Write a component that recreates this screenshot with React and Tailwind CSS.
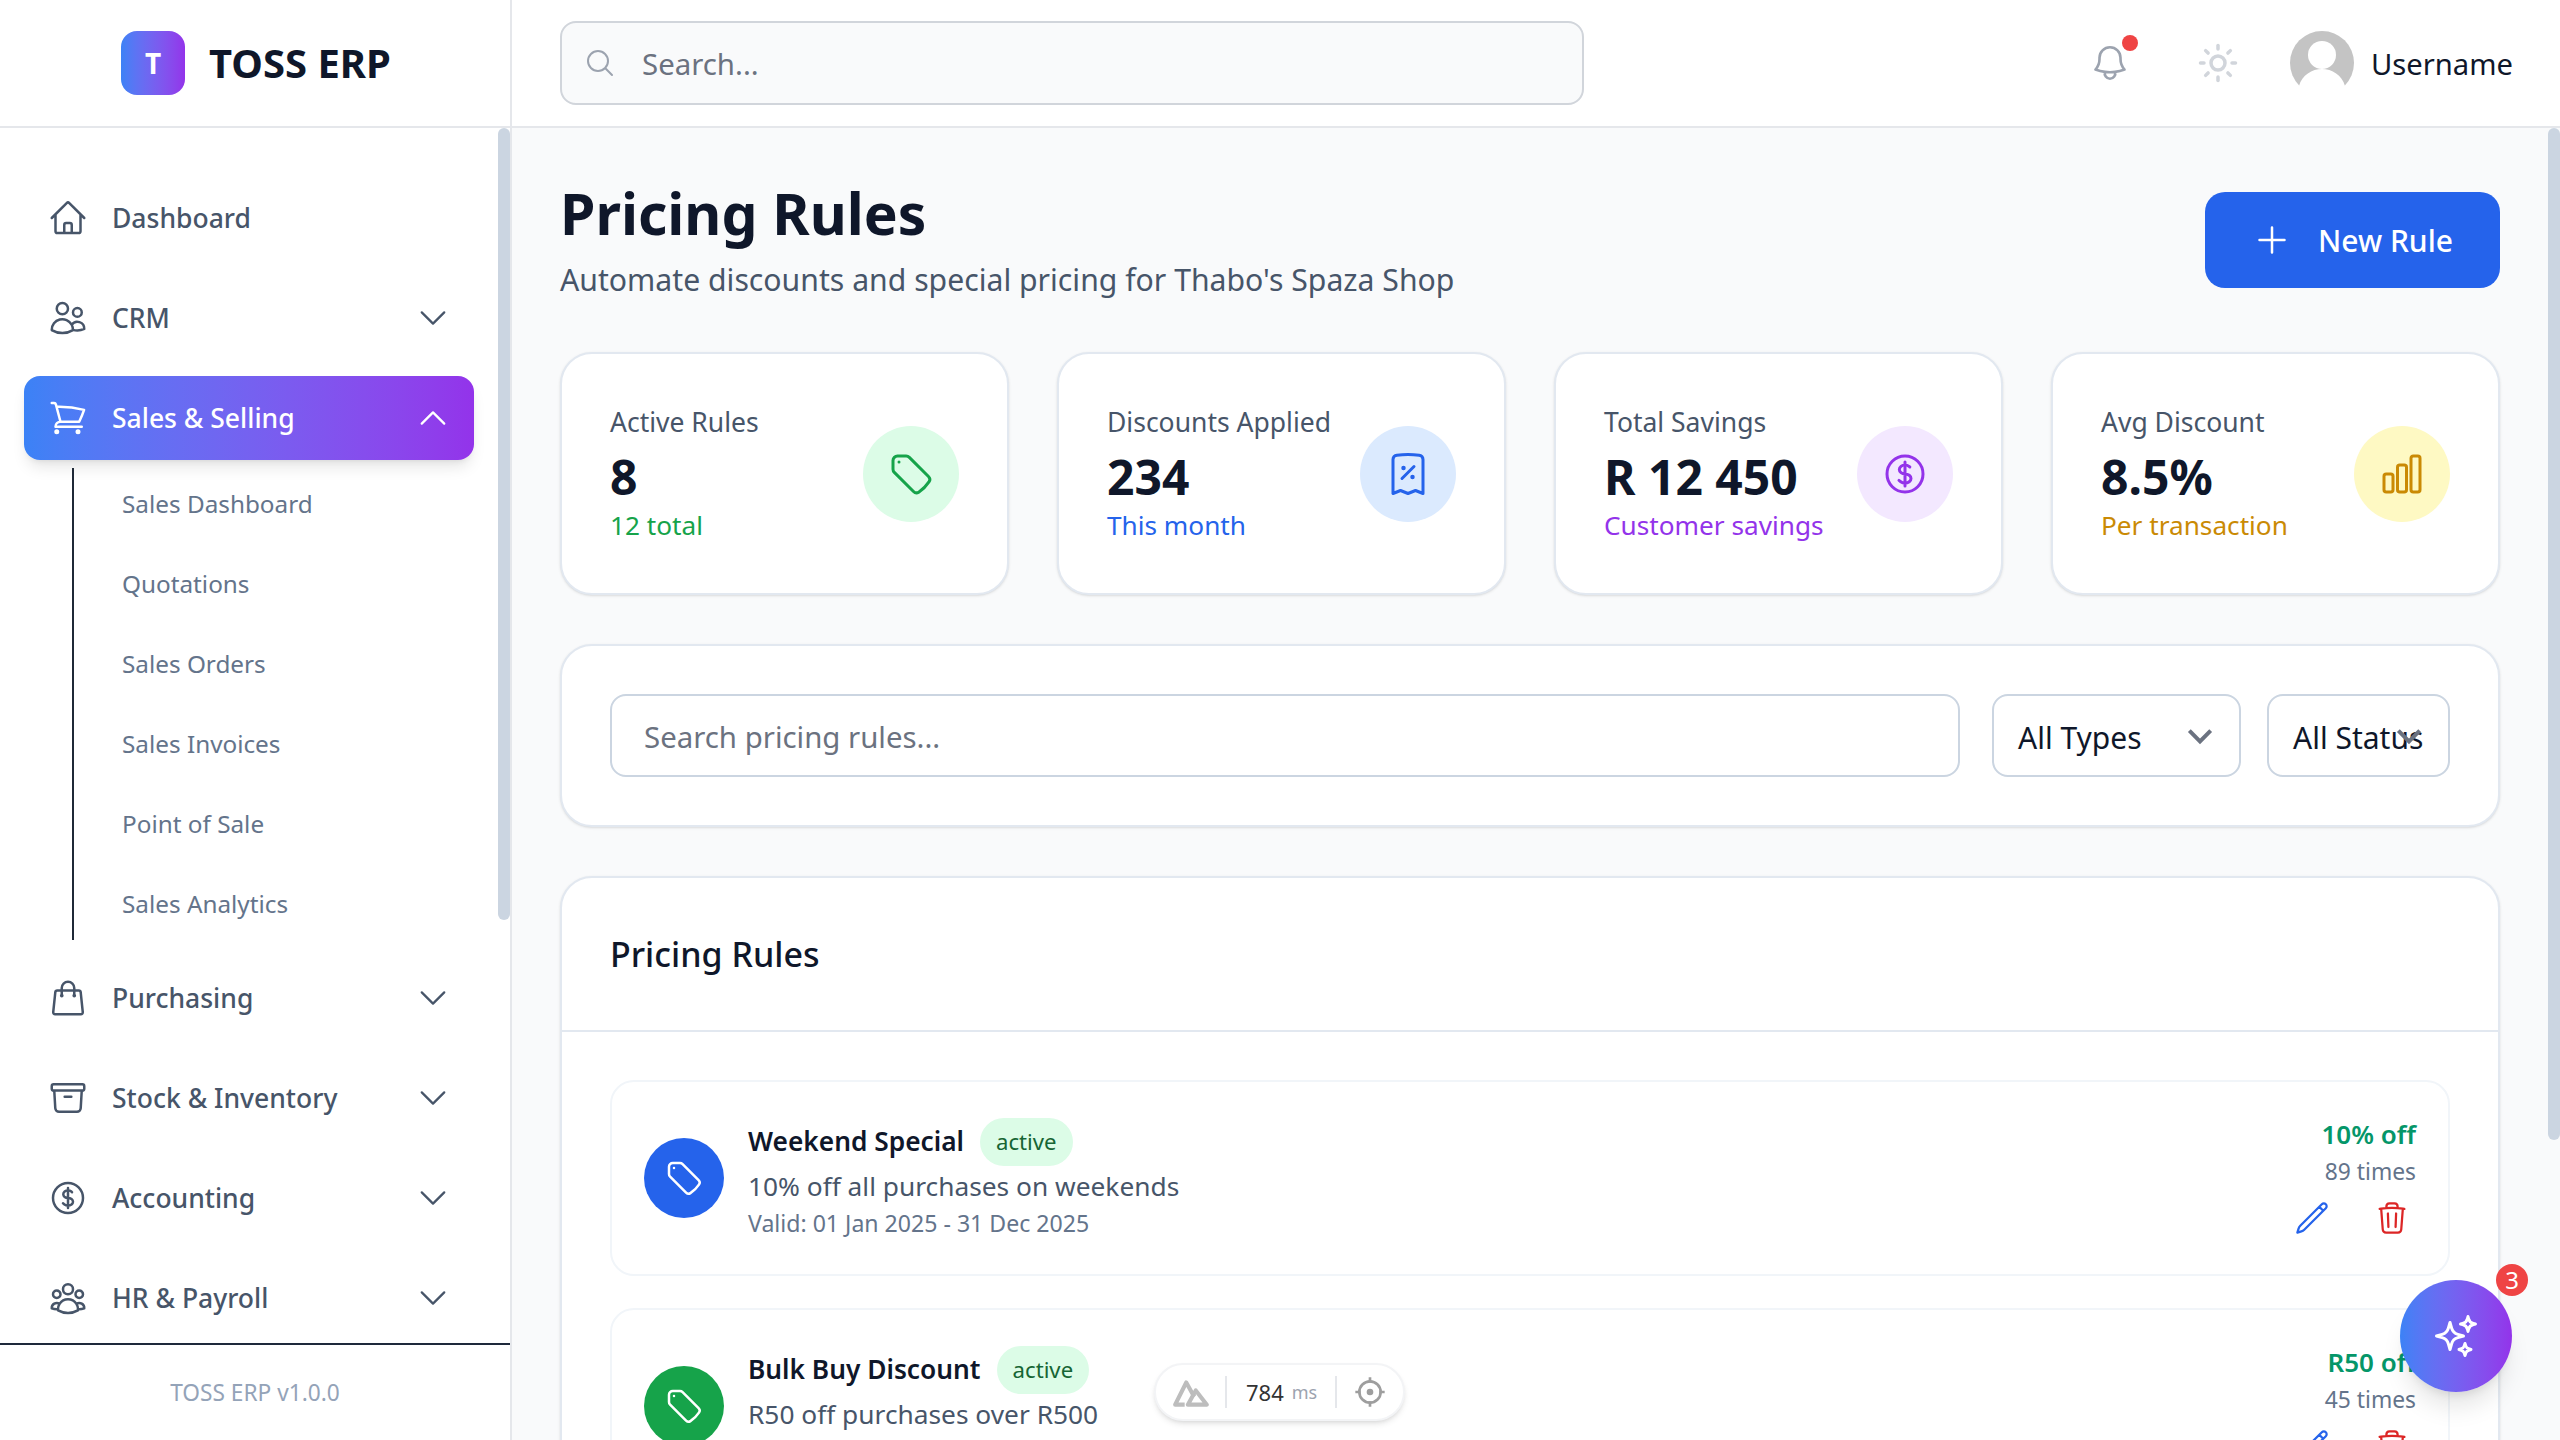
import {
  HiOutlineHome,
  HiOutlineUsers,
  HiOutlineShoppingCart,
  HiOutlineShoppingBag,
  HiOutlineArchiveBox,
  HiOutlineCurrencyDollar,
  HiOutlineUserGroup,
  HiOutlineChevronDown,
  HiOutlineChevronUp,
  HiOutlineMagnifyingGlass,
  HiOutlineBell,
  HiOutlinePlus,
  HiOutlineTag,
  HiOutlineReceiptPercent,
  HiOutlineChartBar,
  HiOutlinePencil,
  HiOutlineTrash,
  HiOutlineSparkles,
} from "react-icons/hi2";
import { Sun } from "lucide-react";

const subItems = ["Sales Dashboard", "Quotations", "Sales Orders", "Sales Invoices", "Point of Sale", "Sales Analytics"];

const stats = [
  { label: "Active Rules", value: "8", sub: "12 total", subColor: "text-[#16a34a]", bg: "bg-[#dcfce7]", Icon: HiOutlineTag, iconColor: "text-[#16a34a]" },
  { label: "Discounts Applied", value: "234", sub: "This month", subColor: "text-[#2563eb]", bg: "bg-[#dbeafe]", Icon: HiOutlineReceiptPercent, iconColor: "text-[#2563eb]" },
  { label: "Total Savings", value: "R 12 450", sub: "Customer savings", subColor: "text-[#9333ea]", bg: "bg-[#f3e8ff]", Icon: HiOutlineCurrencyDollar, iconColor: "text-[#9333ea]" },
  { label: "Avg Discount", value: "8.5%", sub: "Per transaction", subColor: "text-[#ca8a04]", bg: "bg-[#fef9c3]", Icon: HiOutlineChartBar, iconColor: "text-[#ca8a04]" },
];

// second rule's date line falls below the fold
const rules = [
  { name: "Weekend Special", desc: "10% off all purchases on weekends", valid: "Valid: 01 Jan 2025 - 31 Dec 2025", off: "10% off", times: "89 times", color: "bg-[#2563eb]" },
  { name: "Bulk Buy Discount", desc: "R50 off purchases over R500", off: "R50 off", times: "45 times", color: "bg-[#16a34a]" },
];

function NavItem({ Icon, label, chevron = true }) {
  return (
    <div className="flex h-[84px] shrink-0 items-center gap-[24px] rounded-[16px] pl-[24px] pr-[23px] text-[#475569]">
      <Icon className="h-[40px] w-[40px] shrink-0" />
      <span className="flex-1 pt-[1px] text-[26.5px] font-medium">{label}</span>
      {chevron && <HiOutlineChevronDown className="h-[36px] w-[36px] shrink-0" />}
    </div>
  );
}

function Sidebar() {
  return (
    <aside className="relative flex w-[512px] shrink-0 flex-col border-r-2 border-[#e5e7eb] bg-white">
      <nav className="flex flex-1 flex-col gap-[16px] overflow-hidden pl-[24px] pr-[36px] pt-[48px]">
        <NavItem Icon={HiOutlineHome} label="Dashboard" chevron={false} />
        <NavItem Icon={HiOutlineUsers} label="CRM" />
        <div>
          <div className="flex h-[84px] items-center gap-[24px] rounded-[16px] bg-gradient-to-r from-[#3b82f6] to-[#9333ea] pl-[24px] pr-[23px] text-white shadow-lg">
            <HiOutlineShoppingCart className="h-[40px] w-[40px] shrink-0" />
            <span className="flex-1 pt-[1px] text-[26.5px] font-medium">Sales &amp; Selling</span>
            <HiOutlineChevronUp className="h-[36px] w-[36px] shrink-0" />
          </div>
          <div className="ml-[48px] mt-[8px] flex flex-col gap-[16px] border-l-2 border-[#1f2937] py-[4px] pl-[48px]">
            {subItems.map((item) => (
              <div key={item} className="flex h-[64px] items-center text-[24.3px] text-[#64748b]">
                {item}
              </div>
            ))}
          </div>
        </div>
        <NavItem Icon={HiOutlineShoppingBag} label="Purchasing" />
        <NavItem Icon={HiOutlineArchiveBox} label="Stock & Inventory" />
        <NavItem Icon={HiOutlineCurrencyDollar} label="Accounting" />
        <NavItem Icon={HiOutlineUserGroup} label="HR & Payroll" />
      </nav>
      <div className="flex h-[97px] shrink-0 items-center justify-center border-t-2 border-[#1e293b] pt-[2px] text-[22.7px] text-[#94a3b8]">
        TOSS ERP v1.0.0
      </div>
      <div className="absolute right-0 top-0 h-[792px] w-[12px] rounded-full bg-[#cbd5e1]" />
    </aside>
  );
}

function Header() {
  return (
    <header className="flex h-[128px] shrink-0 border-b-2 border-[#e5e7eb] bg-white">
      <div className="flex w-[512px] shrink-0 items-center justify-center gap-[24px] border-r-2 border-[#e5e7eb] pl-[2px]">
        <div className="flex h-[64px] w-[64px] items-center justify-center rounded-[16px] bg-gradient-to-r from-[#3b82f6] to-[#9333ea] text-[28px] font-bold text-white">
          T
        </div>
        <span className="text-[40px] font-bold text-[#0f172a]">TOSS ERP</span>
      </div>
      <div className="flex flex-1 items-center pl-[48px] pr-[49px]">
        <div className="flex h-[84px] w-[1024px] items-center gap-[26px] rounded-[16px] border-2 border-[#d1d5db] bg-[#f9fafb] pl-[22px]">
          <HiOutlineMagnifyingGlass className="h-[32px] w-[32px] text-[#9ca3af]" />
          <span className="pt-[3px] text-[29.4px] text-[#6b7280]">Search...</span>
        </div>
        <div className="ml-auto flex items-center">
          <div className="relative">
            <HiOutlineBell className="h-[42px] w-[42px] text-[#9ca3af]" />
            <span className="absolute left-[33px] top-[-7px] h-[16px] w-[16px] rounded-full bg-[#ef4444]" />
          </div>
          <Sun className="ml-[66px] h-[42px] w-[42px] text-[#d1d5db]" />
          <svg viewBox="0 0 64 64" className="ml-[51px] h-[64px] w-[64px]">
            <circle cx="32" cy="32" r="32" fill="#c4c4c4" />
            <circle cx="32" cy="24" r="14" fill="#fff" />
            <path d="M9 55C12 44 22 38 32 38s20 6 23 17l9 9H0z" fill="#fff" />
          </svg>
          <span className="ml-[17px] w-[140px] whitespace-nowrap pt-[4px] text-[29.2px] text-[#0f172a]">Username</span>
        </div>
      </div>
    </header>
  );
}

function StatCard({ stat }) {
  const { Icon } = stat;
  return (
    <div className="flex h-[243px] items-center justify-between rounded-[32px] border-2 border-[#e2e8f0] bg-white px-[48px] shadow-sm">
      <div>
        <div className="-mt-[1px] text-[26.5px] leading-[40px] text-[#475569]">{stat.label}</div>
        <div className="mt-[7px] text-[48px] font-bold leading-[56px] text-[#0f172a]">{stat.value}</div>
        <div className={`text-[26.2px] leading-[40px] ${stat.subColor}`}>{stat.sub}</div>
      </div>
      <div className={`flex h-[96px] w-[96px] shrink-0 items-center justify-center rounded-full ${stat.bg}`}>
        <Icon className={`h-[48px] w-[48px] ${stat.iconColor}`} />
      </div>
    </div>
  );
}

function SelectBox({ label, className, chevronClass }) {
  return (
    <div className={`relative flex h-[83px] shrink-0 items-center rounded-[16px] border-2 border-[#cbd5e1] bg-white pl-[24px] pt-[3px] text-[30px] text-[#0f172a] ${className}`}>
      {label}
      <svg viewBox="0 0 24 24" className={`absolute top-[24px] h-[32px] w-[32px] text-[#6b7280] ${chevronClass}`} fill="none" stroke="currentColor" strokeWidth="3">
        <path d="M4 8l8 8 8-8" />
      </svg>
    </div>
  );
}

function RuleRow({ rule }) {
  return (
    <div className="flex h-[196px] shrink-0 justify-between rounded-[24px] border-2 border-[#f1f5f9] bg-white p-[32px]">
      <div className="flex items-center gap-[24px]">
        <div className={`flex h-[80px] w-[80px] shrink-0 items-center justify-center rounded-full text-white ${rule.color}`}>
          <HiOutlineTag className="h-[40px] w-[40px]" />
        </div>
        <div>
          <div className="flex h-[54px] items-center gap-[16px] pt-[2px]">
            <span className="text-[26.3px] font-semibold text-[#0f172a]">{rule.name}</span>
            <span className="flex h-[48px] items-center rounded-full bg-[#dcfce7] px-[16px] text-[22.2px] text-[#166534]">active</span>
          </div>
          <div className="-mt-[2px] text-[26.3px] leading-[40px] text-[#475569]">{rule.desc}</div>
          <div className="h-[36px] text-[23.1px] leading-[34px] text-[#64748b]">{rule.valid}</div>
        </div>
      </div>
      <div className="flex flex-col items-end">
        <div className="text-[26px] font-semibold leading-[40px] text-[#059669]">{rule.off}</div>
        <div className="text-[22.8px] leading-[36px] text-[#64748b]">{rule.times}</div>
        <div className="mt-[10px] flex gap-[44px] pr-[6px]">
          <HiOutlinePencil className="h-[36px] w-[36px] text-[#2563eb]" />
          <HiOutlineTrash className="h-[36px] w-[36px] text-[#dc2626]" />
        </div>
      </div>
    </div>
  );
}

function Main() {
  return (
    <main className="relative flex-1 overflow-hidden bg-[#f9fafb] pl-[48px] pr-[60px] pt-[48px]">
      <div className="flex items-center justify-between">
        <div>
          <h1 className="pt-[2px] text-[57px] font-bold leading-[70px] text-[#0f172a]">Pricing Rules</h1>
          <p className="mt-[8px] text-[30.2px] leading-[48px] text-[#475569]">Automate discounts and special pricing for Thabo's Spaza Shop</p>
        </div>
        <button className="flex h-[96px] w-[295px] items-center gap-[26px] rounded-[20px] bg-[#2563eb] pl-[47px] text-[30px] font-medium text-white">
          <HiOutlinePlus className="h-[40px] w-[40px]" />
          New Rule
        </button>
      </div>

      <div className="mt-[48px] grid grid-cols-4 gap-[48px]">
        {stats.map((stat) => (
          <StatCard key={stat.label} stat={stat} />
        ))}
      </div>

      <div className="mt-[49px] flex items-center rounded-[32px] border-2 border-[#e2e8f0] bg-white p-[48px] shadow-sm">
        <div className="flex h-[83px] flex-1 items-center rounded-[16px] border-2 border-[#cbd5e1] pl-[32px] pt-[3px] text-[29.4px] text-[#6b7280]">
          Search pricing rules...
        </div>
        <SelectBox label="All Types" className="ml-[32px] w-[249px]" chevronClass="left-[190px]" />
        <SelectBox label="All Status" className="ml-[26px] w-[183px]" chevronClass="left-[124px]" />
      </div>

      <div className="mt-[49px] rounded-[32px] border-2 border-[#e2e8f0] bg-white shadow-sm">
        <div className="border-b-2 border-[#e2e8f0] p-[48px]">
          <h2 className="text-[34px] font-medium leading-[56px] text-[#0f172a]">Pricing Rules</h2>
        </div>
        <div className="flex flex-col gap-[32px] p-[48px]">
          {rules.map((rule) => (
            <RuleRow key={rule.name} rule={rule} />
          ))}
        </div>
      </div>
      <div className="absolute right-0 top-0 h-[1012px] w-[12px] rounded-full bg-[#cbd5e1]" />
    </main>
  );
}

function DevPill() {
  return (
    <div className="absolute left-[1154px] top-[1363px] flex h-[58px] w-[251px] items-center rounded-full border-2 border-[#f3f4f6] bg-white pl-[16px] shadow-md">
      <svg viewBox="0 0 24 24" className="h-[38px] w-[38px]" fill="none" stroke="#bdbdbd" strokeWidth="2.6" strokeLinejoin="round">
        <path d="M8 20H2L9 6l5 9" />
        <path d="M10 20l5-9 7 9z" />
      </svg>
      <span className="ml-[15px] h-[32px] w-[2px] bg-[#e5e7eb]" />
      <span className="ml-[19px] text-[22px] text-[#333333]">784</span>
      <span className="ml-[8px] text-[18px] text-[#9ca3af]">ms</span>
      <span className="ml-[18px] h-[32px] w-[2px] bg-[#e5e7eb]" />
      <svg viewBox="0 0 24 24" className="ml-[17px] h-[32px] w-[32px]" fill="none" stroke="#9e9e9e" strokeWidth="2">
        <circle cx="12" cy="12" r="8" />
        <path d="M12 1v4M12 19v4M1 12h4M19 12h4" />
        <circle cx="12" cy="12" r="1.5" fill="#9e9e9e" />
      </svg>
    </div>
  );
}

export default function App() {
  return (
    <div className="relative flex h-[1440px] w-[2560px] flex-col overflow-hidden bg-white font-['Noto_Sans',sans-serif]">
      <Header />
      <div className="flex min-h-0 flex-1">
        <Sidebar />
        <Main />
      </div>
      <DevPill />
      <div className="absolute left-[2400px] top-[1280px] flex h-[112px] w-[112px] items-center justify-center rounded-full bg-gradient-to-r from-[#3b82f6] to-[#9333ea] text-white shadow-xl">
        <HiOutlineSparkles className="h-[48px] w-[48px]" />
        <span className="absolute right-[-16px] top-[-16px] flex h-[32px] w-[32px] items-center justify-center rounded-full bg-[#ef4444] text-[24px]">3</span>
      </div>
    </div>
  );
}
